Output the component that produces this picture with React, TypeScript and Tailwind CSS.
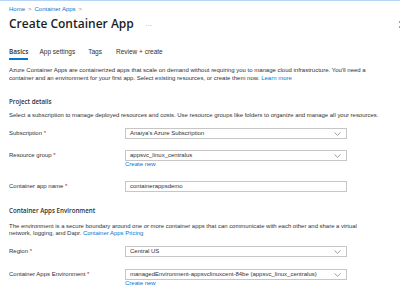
import React from "react";

const font = { fontFamily: '"Liberation Sans", Arial, sans-serif' };

function Chevron() {
  return (
    <svg width="7" height="4" viewBox="0 0 7 4" className="shrink-0">
      <path d="M0.5 0.5 L3.5 3.3 L6.5 0.5" fill="none" stroke="#8a8886" strokeWidth="0.8" />
    </svg>
  );
}

function Label({ text, required = true }: { text: string; required?: boolean }) {
  return (
    <div className="w-[116px] shrink-0 text-[6px] leading-[11px] text-[#323130]">
      {text}
      {required && <span className="text-[#a4262c]"> *</span>}
    </div>
  );
}

function Field({ value, select = true }: { value: string; select?: boolean }) {
  return (
    <div className="w-[222px] h-[11px] border border-[#c8c6c4] flex items-center justify-between pl-[4px] pr-[5px]">
      <span className="text-[6px] leading-[9px] text-[#323130] whitespace-nowrap">{value}</span>
      {select && <Chevron />}
    </div>
  );
}

function CreateNew() {
  return <div className="ml-[116px] text-[6px] leading-[7px] text-[#0078d4]">Create new</div>;
}

export default function App() {
  return (
    <div className="w-[400px] h-[306px] bg-white overflow-hidden relative border-t border-[#b6d5f5]" style={font}>
      <div className="absolute right-0 top-[20px] w-[1px] h-[2px] bg-[#a19f9d]" />
      <div className="absolute right-0 top-[25px] w-[1px] h-[2px] bg-[#a19f9d]" />

      <div className="px-[9px]">
        {/* breadcrumb */}
        <div className="mt-[4px] flex items-center gap-[3px] text-[6px] leading-[8px] text-[#0078d4]">
          <span>Home</span>
          <span className="text-[#8a8886]">&gt;</span>
          <span>Container Apps</span>
          <span className="text-[#8a8886]">&gt;</span>
        </div>

        {/* title */}
        <div className="mt-[4px] flex items-center h-[14px]">
          <h1 className="text-[12px] leading-[14px] font-semibold text-[#201f1e]" style={{ fontFamily: '"Open Sans", sans-serif' }}>
            Create Container App
          </h1>
          <span className="ml-[12px] text-[6px] text-[#605e5c] tracking-[0.5px]">...</span>
        </div>

        {/* tabs */}
        <div className="mt-[17px] flex text-[6.5px] leading-[8px] text-[#323130]">
          <div className="pb-[2px] border-b-2 border-[#0078d4] font-semibold" style={{ fontFamily: '"Open Sans", sans-serif' }}>Basics</div>
          <div className="ml-[11px]">App settings</div>
          <div className="ml-[13px]">Tags</div>
          <div className="ml-[14px]">Review + create</div>
        </div>

        {/* intro */}
        <div className="mt-[7px] text-[6px] leading-[7.5px] text-[#323130] whitespace-nowrap">
          <div>Azure Container Apps are containerized apps that scale on demand without requiring you to manage cloud infrastructure. You'll need a</div>
          <div>
            container and an environment for your first app. Select existing resources, or create them now.{" "}
            <span className="text-[#0078d4]">Learn more</span>
          </div>
        </div>

        {/* project details */}
        <div className="mt-[16px] text-[6.2px] leading-[8px] font-semibold text-[#323130]" style={{ fontFamily: '"Open Sans", sans-serif' }}>
          Project details
        </div>
        <div className="mt-[5px] text-[5.95px] leading-[8px] text-[#323130] whitespace-nowrap">
          Select a subscription to manage deployed resources and costs. Use resource groups like folders to organize and manage all your resources.
        </div>

        <div className="mt-[9px] flex">
          <Label text="Subscription" />
          <Field value="Anaiya's Azure Subscription" />
        </div>

        <div className="mt-[11px] flex">
          <Label text="Resource group" />
          <Field value="appsvc_linux_centralus" />
        </div>
        <CreateNew />

        <div className="mt-[13px] flex">
          <Label text="Container app name" />
          <Field value="containerappsdemo" select={false} />
        </div>

        {/* environment */}
        <div className="mt-[15px] text-[6.2px] leading-[8px] font-semibold text-[#323130]" style={{ fontFamily: '"Open Sans", sans-serif' }}>
          Container Apps Environment
        </div>
        <div className="mt-[7.5px] text-[5.95px] leading-[7px] text-[#323130] whitespace-nowrap">
          <div>The environment is a secure boundary around one or more container apps that can communicate with each other and share a virtual</div>
          <div>
            network, logging, and Dapr. <span className="text-[#0078d4]">Container Apps Pricing</span>
          </div>
        </div>

        <div className="mt-[9.5px] flex">
          <Label text="Region" />
          <Field value="Central US" />
        </div>

        <div className="mt-[12px] flex">
          <Label text="Container Apps Environment" />
          <Field value="managedEnvironment-appsvclinuxcent-84be (appsvc_linux_centralus)" />
        </div>
        <CreateNew />
      </div>
    </div>
  );
}
